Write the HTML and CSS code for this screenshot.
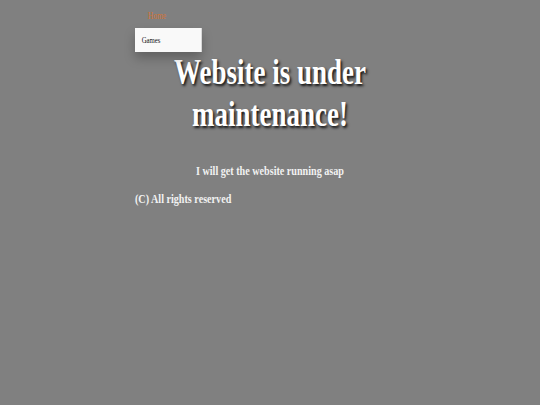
FILE: index.html
```html
<!DOCTYPE html>
<html>
<head>
<meta charset="utf-8">
<link rel="stylesheet" href="styles.css">
</head>
<body>
<div class="viewport">
  <div class="stage">
    <div class="page">
      <nav class="nav">
        <div class="dropdown">
          <a class="nav-link" href="#">Home</a>
          <div class="dropdown-menu">
            <a class="dropdown-item" href="#">Games</a>
          </div>
        </div>
      </nav>
      <main class="content">
        <h1 class="title">Website is under<br>maintenance!</h1>
        <p class="lead">I will get the website running asap</p>
        <p class="footer">(C) All rights reserved</p>
      </main>
    </div>
  </div>
</div>
</body>
</html>
```

FILE: styles.css
```css
html, body {
  margin: 0;
  padding: 0;
  background: #808080;
}
.viewport {
  width: 540px;
  height: 405px;
  overflow: hidden;
}
.stage {
  width: 720px;
  height: 405px;
  transform: scaleX(0.75);
  transform-origin: 0 0;
  font-family: "Liberation Serif", "Times New Roman", serif;
}
.page {
  width: 360px;
  margin: 0 auto;
}
.nav {
  height: 28px;
  position: relative;
}
.dropdown {
  position: relative;
  display: inline-block;
}
.nav-link {
  display: block;
  padding: 10px 0 0 17px;
  font-size: 10px;
  line-height: 12px;
  color: #cf7438;
  text-decoration: none;
}
.dropdown-menu {
  position: absolute;
  top: 28px;
  left: 0;
  width: 89px;
  height: 24px;
  background: #f9f9f9;
  box-shadow: 0 6px 12px rgba(0, 0, 0, 0.25);
  z-index: 2;
  display: flex;
  align-items: center;
}
.dropdown-item {
  padding-left: 9px;
  font-size: 9px;
  color: #111;
  text-decoration: none;
}
.content {
  color: #fff;
}
.title {
  margin: 23px 0 0;
  font-size: 36px;
  line-height: 42px;
  font-weight: bold;
  text-align: center;
  text-shadow: 2px 2px 3px #111;
}
.lead {
  margin: 28px 0 0;
  font-size: 13.5px;
  line-height: 16px;
  font-weight: bold;
  text-align: center;
  color: #f2f2f2;
}
.footer {
  margin: 12px 0 0;
  font-size: 13.5px;
  line-height: 16px;
  font-weight: bold;
  color: #f2f2f2;
}
```
